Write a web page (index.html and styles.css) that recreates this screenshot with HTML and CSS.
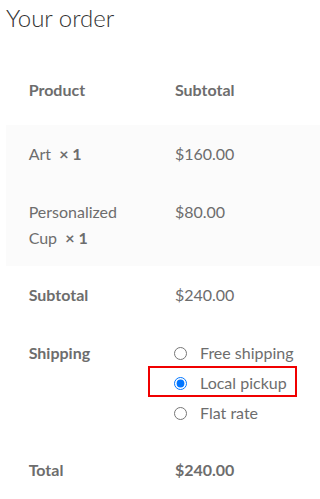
FILE: index.html
```html
<!DOCTYPE html>
<html lang="en">
<head>
<meta charset="utf-8">
<title>Your order</title>
<link rel="stylesheet" href="styles.css">
</head>
<body>
<div class="checkout">
  <h3 class="order-heading">Your order</h3>
  <table class="order-table">
    <thead>
      <tr>
        <th class="col-product">Product</th>
        <th class="col-total">Subtotal</th>
      </tr>
    </thead>
    <tbody>
      <tr class="cart-item">
        <td>Art&nbsp; <strong class="qty">×&nbsp;1</strong></td>
        <td>$160.00</td>
      </tr>
      <tr class="cart-item">
        <td>Personalized Cup&nbsp; <strong class="qty">×&nbsp;1</strong></td>
        <td>$80.00</td>
      </tr>
    </tbody>
    <tfoot>
      <tr>
        <th>Subtotal</th>
        <td>$240.00</td>
      </tr>
      <tr class="shipping">
        <th>Shipping</th>
        <td>
          <ul class="shipping-methods">
            <li><label><input type="radio" name="ship"> Free shipping</label></li>
            <li class="highlight"><label><input type="radio" name="ship" checked> Local pickup</label></li>
            <li><label><input type="radio" name="ship"> Flat rate</label></li>
          </ul>
        </td>
      </tr>
      <tr class="order-total">
        <th>Total</th>
        <td><strong>$240.00</strong></td>
      </tr>
    </tfoot>
  </table>
</div>
</body>
</html>
```
FILE: styles.css
```css
html, body {
  margin: 0;
  padding: 0;
  background: #ffffff;
}

body {
  font-family: Lato, "Liberation Sans", sans-serif;
  font-size: 16px;
  line-height: 1.618;
  color: #6d6d6d;
}

.checkout {
  padding-left: 6px;
}

.order-heading {
  margin: 0;
  padding-top: 1px;
  font-size: 24px;
  line-height: 33px;
  font-weight: 300;
  color: #333333;
  height: 53px;
}

.order-table {
  width: 314px;
  border-collapse: collapse;
  border-spacing: 0;
  table-layout: fixed;
}

.order-table th,
.order-table td {
  text-align: left;
  vertical-align: top;
  padding: 16px 22.65px 15.8px;
}

.order-table th {
  font-weight: 700;
}

.order-table thead th {
  padding-top: 22.65px;
  padding-bottom: 22.65px;
  vertical-align: middle;
}

.col-product {
  width: 101px;
}

.order-table tbody td {
  background: #fbfbfb;
}

.qty {
  font-weight: 700;
}

.shipping-methods {
  list-style: none;
  margin: 0;
  padding: 0;
}

.shipping-methods li {
  margin: 0 0 4px;
  position: relative;
}

.shipping-methods li:last-child {
  margin-bottom: 0;
}

.shipping-methods label {
  font-weight: 400;
}

.shipping-methods input {
  width: 13px;
  height: 13px;
  margin: 0 9px 0 -1px;
  vertical-align: -1px;
}

.highlight::after {
  content: "";
  position: absolute;
  left: -27px;
  top: -4px;
  width: 149px;
  height: 31px;
  box-sizing: border-box;
  border: 2px solid #f00000;
  pointer-events: none;
}
```
